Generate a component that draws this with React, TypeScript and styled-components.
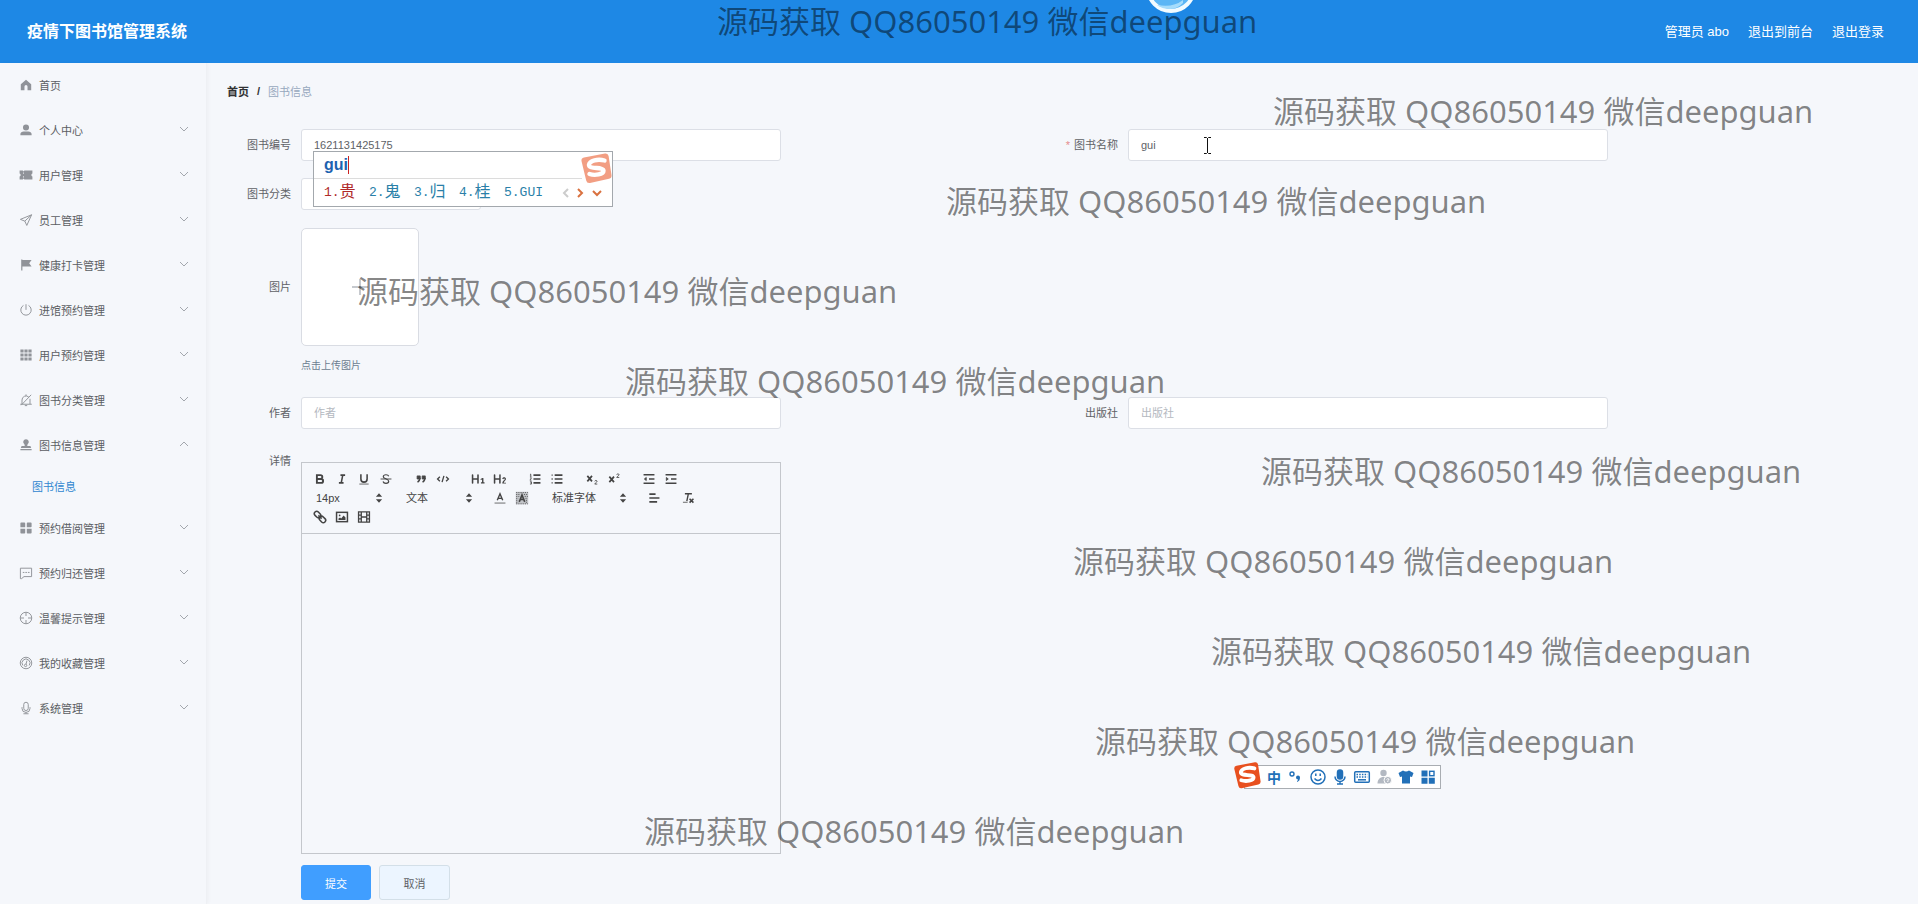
import React from "react";
import styled, { createGlobalStyle } from "styled-components";

const SANS = '"Liberation Sans", "Noto Sans CJK SC", sans-serif';

const Global = createGlobalStyle`
  *, *::before, *::after { box-sizing: border-box; }
  html, body { margin: 0; background: #f5f7fa; }
  body { font-family: ${SANS}; font-size: 11px; color: #606266; overflow: hidden; }
  button, input, select { font: inherit; color: inherit; }
  a { color: inherit; text-decoration: none; }
`;

const Page = styled.div`
  position: relative;
  min-height: 100vh;
  display: flex;
  flex-direction: column;
  background: #f5f7fb;
  overflow: hidden;
`;

const Header = styled.header`
  height: 63px;
  padding: 0 34px 0 27px;
  display: flex;
  align-items: center;
  justify-content: space-between;
  background: #1e88e5;
  color: #fff;
`;

const Title = styled.h1`
  margin: 0;
  font-size: 16px;
  line-height: 24px;
  font-weight: 700;
`;

const UserLinks = styled.nav`
  display: flex;
  gap: 19px;
  font-size: 13px;
  line-height: 20px;
`;

const Body = styled.div`
  flex: 1;
  display: flex;
`;

const Sidebar = styled.nav`
  flex: 0 0 207px;
  border-right: 1px solid #eef0f4;
  box-shadow: 1px 0 4px rgba(0, 0, 0, 0.04);
`;

const MenuItem = styled.a<{ $plain?: boolean }>`
  height: ${(p) => (p.$plain ? 44 : 45)}px;
  padding: 0 16px 0 18px;
  display: flex;
  align-items: center;
  gap: 5px;
  color: #5b5e63;

  > svg:first-child { color: #909399; }
  > svg:last-child:not(:first-child) { margin-left: auto; color: #a3a7ad; }
`;

const SubItem = styled.a`
  height: 38px;
  padding-left: 32px;
  display: flex;
  align-items: center;
  color: #2f86d0;
`;

const Main = styled.main`
  flex: 1;
  min-width: 0;
  padding: 18px 27px 4px 20px;
`;

const Crumbs = styled.nav`
  height: 20px;
  display: flex;
  align-items: center;
  gap: 8px;
  color: #97a8be;

  a { color: #303133; font-weight: 700; }
  span { color: #303133; font-weight: 700; }
`;

const Form = styled.form`
  margin-top: 28px;
  padding-left: 10px;
  display: flex;
  flex-direction: column;
`;

const Row = styled.div<{ $gap?: number }>`
  display: grid;
  grid-template-columns: 1fr 1fr;
  margin-bottom: ${(p) => p.$gap ?? 17}px;
`;

const Field = styled.div`
  display: flex;
  align-items: flex-start;
`;

const Label = styled.label<{ $tall?: boolean; $top?: boolean }>`
  flex: 0 0 64px;
  padding-right: 10px;
  text-align: right;
  white-space: nowrap;
  line-height: ${(p) => (p.$tall ? 118 : p.$top ? 0 : 32)}px;
`;

const Star = styled.span`
  margin-right: 4px;
  color: #e58c8c;
`;

const TextInput = styled.input`
  width: 480px;
  height: 32px;
  padding: 0 12px;
  border: 1px solid #dcdfe6;
  border-radius: 3px;
  background: #fff;
  outline: none;
  &::placeholder { color: #b4b8c0; opacity: 1; }
`;

const CategorySelect = styled.select`
  width: 180px;
  height: 32px;
  padding: 0 12px;
  border: 1px solid #dcdfe6;
  border-radius: 3px;
  background: #fff;
  appearance: none;
`;

const UploadBox = styled.button`
  width: 118px;
  height: 118px;
  display: flex;
  align-items: center;
  justify-content: center;
  border: 1px solid #d9dce3;
  border-radius: 5px;
  background: #fff;
  color: #8c939d;
`;

const Hint = styled.p`
  margin: 10px 0 0;
  font-size: 10px;
  line-height: 20px;
  color: #6c7d90;
`;

const Editor = styled.div`
  width: 480px;
  margin-top: 1px;
  border: 1px solid #c4c7cc;
`;

const Toolbar = styled.div`
  padding: 6px 6px 7px 7px;
  border-bottom: 1px solid #c4c7cc;
  color: #444;
`;

const ToolRow = styled.div<{ $gap: number }>`
  height: 19px;
  display: flex;
  align-items: center;
  gap: ${(p) => p.$gap}px;
`;

const ToolGroup = styled.div`
  display: flex;
`;

const ToolButton = styled.button`
  width: 22px;
  height: 19px;
  padding: 0;
  display: flex;
  align-items: center;
  justify-content: center;
  border: 0;
  background: none;
`;

const Picker = styled.div<{ $w: number }>`
  width: ${(p) => p.$w}px;
  height: 19px;
  padding-right: 1px;
  display: flex;
  align-items: center;

  select {
    flex: 1;
    min-width: 0;
    height: 19px;
    padding: 0 0 0 7px;
    border: 0;
    background: none;
    appearance: none;
  }
`;

const Writing = styled.div`
  height: 319px;
  outline: none;
`;

const Actions = styled.div`
  margin: 11px 0 0 64px;
  display: flex;
  gap: 8px;
`;

const Action = styled.button<{ $primary?: boolean }>`
  width: ${(p) => (p.$primary ? 70 : 71)}px;
  height: 35px;
  padding: 0;
  border: 1px solid ${(p) => (p.$primary ? "#409eff" : "#d3dfe8")};
  border-radius: 3px;
  background: ${(p) => (p.$primary ? "#409eff" : "#ecf5ff")};
  color: ${(p) => (p.$primary ? "#fff" : "#606266")};
`;

const Watermark = styled.div<{ $x: number; $y: number }>`
  position: absolute;
  left: ${(p) => p.$x}px;
  top: ${(p) => p.$y}px;
  z-index: 5;
  font: 31px/40px "Noto Sans", "Noto Sans CJK SC", sans-serif;
  white-space: nowrap;
  color: rgba(0, 0, 0, 0.48);
  pointer-events: none;
`;

const Bubble = styled.svg`
  position: absolute;
  left: 1146px;
  top: 0;
  z-index: 4;
`;

const Pointer = styled.svg`
  position: absolute;
  left: 1203px;
  top: 137px;
  z-index: 6;
`;

const Ime = styled.div`
  position: absolute;
  left: 313px;
  top: 151px;
  z-index: 4;
  width: 300px;
  height: 56px;
  border: 1px solid #a3a8ad;
  background: #fff;

  > svg { position: absolute; right: 0; top: 0; }
`;

const Composing = styled.div`
  height: 27px;
  margin-right: 30px;
  padding-left: 10px;
  display: flex;
  align-items: center;
  border-bottom: 1px solid #dcdcdc;
  font-size: 16px;
  font-weight: 700;
  color: #1d62b0;

  &::after { content: ""; width: 1px; height: 18px; background: #c22; }
`;

const Candidates = styled.div`
  height: 27px;
  padding: 0 6px 0 10px;
  display: flex;
  align-items: center;
  font: 13px/20px "Liberation Mono", "Noto Sans CJK SC", monospace;
  color: #2a7fa8;
`;

const Candidate = styled.span<{ $hot?: boolean }>`
  width: 45px;
  display: flex;
  align-items: center;
  white-space: nowrap;
  color: ${(p) => (p.$hot ? "#b02a2a" : "inherit")};

  b { font-size: 16px; font-weight: 400; }
`;

const ImeNav = styled.span`
  margin-left: auto;
  display: flex;
  align-items: center;
`;

const ImeBar = styled.div`
  position: absolute;
  left: 1244px;
  top: 765px;
  z-index: 6;
  width: 197px;
  height: 24px;
  padding-left: 18px;
  display: flex;
  align-items: center;
  border: 1px solid #a9adb2;
  background: #fff;
  color: #2270b8;

  > svg:first-child { position: absolute; left: -12px; top: -5px; }
  > svg:not(:first-child), > span { flex: 0 0 22px; }
  > span { font: 700 14px/20px "Noto Sans CJK SC", sans-serif; text-align: center; }
`;

const menuIcons: Record<string, React.ReactNode> = {
  home: <path fill="currentColor" d="M8 1.5 1.5 7v7.5h4.6V10a1.9 1.9 0 0 1 3.8 0v4.5h4.6V7z" />,
  user: <path fill="currentColor" d="M8 1a3.8 3.8 0 1 1 0 7.6A3.8 3.8 0 0 1 8 1zM1 14.5V13c0-2 2-3.200 4-3.200h6c2 0 4 1.200 4 3.200v1.500z" />,
  ticket: <path fill="currentColor" d="M0 2.500h4l1 1 1-1h10v3.700a1.900 1.900 0 0 0 0 3.600v3.700H6l-1-1-1 1H0V9.800a1.900 1.900 0 0 0 0-3.600zM4.500 5v1.500h1V5zm0 4.500V11h1V9.500z" />,
  send: <path d="M15 1.500 1 7.200l5.500 2.200L9 14.800zM15 1.500 6.500 9.400" />,
  flag: <path fill="currentColor" d="M2 1h1.500v.8H15l-3 4 3 4.200H3.500V15H2z" />,
  power: <path d="M8 .8v7M4.800 2.300a6.500 6.500 0 1 0 6.400 0" />,
  grid9: <path fill="currentColor" d="M1 1h4v4H1zM6 1h4v4H6zM11 1h4v4h-4zM1 6h4v4H1zM6 6h4v4H6zM11 6h4v4h-4zM1 11h4v4H1zM6 11h4v4H6zM11 11h4v4h-4z" />,
  bell: <path d="M.8 13.300h14.400M3 13V8a5 5 0 0 1 8.500-3.600M13 6.500V13M8 3V1M6.500 15h3M2 14.500 14.500 1.500" />,
  stamp: <path fill="currentColor" d="M8 .8a3.400 3.400 0 0 1 2 6.200l-.5 2.200h4l1 2.500h-13l1-2.500h4L6 7A3.400 3.400 0 0 1 8 .8zM1 13h14v1.700H1z" />,
  grid4: <path fill="currentColor" d="M2 1h4q1 0 1 1v5H1V2q0-1 1-1zM10 1h4q1 0 1 1v4q0 1-1 1H9V2q0-1 1-1zM1 9h6v5q0 1-1 1H2q-1 0-1-1zM9 9h6v5q0 1-1 1h-4q-1 0-1-1z" />,
  chat: <path d="M1 2h14v10.500H5.500L2.500 15H1zM4 7.300h2M7.200 7.300h2M10.400 7.300h2" />,
  aim: <path d="M8 .8a7.200 7.200 0 1 0 0 14.400A7.200 7.200 0 0 0 8 .8zM8 1v4.500M8 10.500V15M1 8h4.500M10.500 8H15" />,
  gauge: <path d="M8 .8a7.200 7.200 0 1 0 0 14.400A7.200 7.200 0 0 0 8 .8zM4 11a5 5 0 1 1 8 0M7.500 9.500a1.500 1.500 0 1 0 0 3 1.500 1.500 0 0 0 0-3zM8 9.500l1.200-4.500" />,
  mic: <path d="M8 .8a2.800 2.800 0 0 1 2.800 2.800v4.800a2.800 2.800 0 0 1-5.600 0V3.600A2.800 2.800 0 0 1 8 .8zM3 7v1.500a5 5 0 0 0 10 0V7M8 13.500V15M4.800 15.200h6.400" />,
};

const MenuIcon = ({ name }: { name: string }) => (
  <svg width="16" height="16" viewBox="-2 -2 20 20" fill="none" stroke="currentColor" strokeWidth={/home|user|ticket|flag|grid|stamp/.test(name) ? 0 : 1.2}>
    {menuIcons[name]}
  </svg>
);

const Chevron = ({ up }: { up?: boolean }) => (
  <svg width="12" height="12" viewBox="0 0 12 12" fill="none" stroke="currentColor">
    <path d={up ? "M2 7l4-4 4 4" : "M2 3l4 4 4-4"} />
  </svg>
);

const Sogou = ({ size, faded }: { size: number; faded?: boolean }) => (
  <svg width={size} height={size} viewBox="0 0 32 32" opacity={faded ? 0.55 : 1}>
    <path d="M4 5.500 25 1.500q3-.5 3.600 2.500L31.500 23q.5 3-2.500 3.800L10 31q-3 .6-3.800-2.400L1.500 9Q1 6 4 5.500z" fill="#e8501f" />
    <path d="M24.500 8.500C18 6.500 9.500 8.500 9 12.800c-.4 5 14.500 1.600 14.500 6 0 3.600-8.500 5-14 3.200" fill="none" stroke="#fff" strokeWidth="4.400" strokeLinecap="round" />
  </svg>
);

const tools: Record<string, React.ReactNode> = {
  粗体: <g strokeWidth="2.400"><path d="M5 4h4.500a2.500 2.500 0 0 1 0 5H5zM5 9h5.500a2.500 2.500 0 0 1 0 5H5z" /></g>,
  斜体: <g strokeWidth="2"><path d="M7 4h6M5 14h6M8 14l2-10" /></g>,
  下划线: <><path strokeWidth="2" d="M5 3v6a4 4 0 0 0 8 0V3" /><path strokeWidth="1" d="M3 15.500h12" /></>,
  删除线: <><path strokeWidth="1.500" d="M12.500 5.500C12 4 10.500 3.500 9 3.500c-2 0-3.500 1-3.500 2.600C5.500 9 12.500 8.500 12.500 12c0 1.600-1.500 2.600-3.500 2.600-1.800 0-3.400-.8-3.800-2.400" /><path strokeWidth="1.200" d="M2 9h14" /></>,
  引用: <g fill="currentColor" strokeWidth="1"><path d="M4 5h4v4H4zM10.500 5h4v4h-4z" /><path strokeWidth="2" fill="none" d="M7.500 7.500c0 3-1 4.500-3 5.500M14 7.500c0 3-1 4.500-3 5.500" /></g>,
  代码: <g strokeWidth="1.700"><path d="M5 6 2 9l3 3M13 6l3 3-3 3M10.200 5 7.800 13" /></g>,
  一级标题: <path fill="currentColor" stroke="none" d="M10 4v10a1 1 0 0 1-2 0v-4H3v4a1 1 0 0 1-2 0V4a1 1 0 0 1 2 0v4h5V4a1 1 0 0 1 2 0zm6 9.200V8.200c0-.3-.3-.5-.6-.5h-.8l-2.200 1.200v1.400l1.800-.6v3.500h-1.400V14.800h4.600v-1.600z" />,
  二级标题: <path fill="currentColor" stroke="none" d="M16.700 13.800v1H12v-1c.3-2.600 3.200-3 3.200-4.700 0-1.300-1.800-1-1.900.1l-1.400-.4c.4-2.800 4.800-2.500 4.800.2 0 2-2.600 2.700-2.900 4.800zM9.900 4v10a1 1 0 0 1-2 0v-4H3v4a1 1 0 0 1-2 0V4a1 1 0 0 1 2 0v4h5V4a1 1 0 0 1 2 0z" />,
  有序列表: <><path strokeWidth="2" d="M7 4h9M7 9h9M7 14h9" /><path strokeWidth="1" d="M3.500 2.500v3M2.500 5.500h2M2.500 3.500l1-.8M2.500 7.500h2l-2 3h2M2.500 12.500h2v3h-2M3 14h1.500" /></>,
  无序列表: <><path strokeWidth="2" d="M6 4h10M6 9h10M6 14h10" /><path strokeWidth="1.800" d="M2 4h1.500M2 9h1.500M2 14h1.500" /></>,
  下标: <><path strokeWidth="2.200" d="M3 5l6 7M9 5l-6 7" /><path strokeWidth="1.100" d="M12.500 12c.2-1.500 3-1.500 3 0 0 1.200-2.500 2-3 3.500h3.300" /></>,
  上标: <><path strokeWidth="2.200" d="M3 6l6 7M9 6l-6 7" /><path strokeWidth="1.100" d="M12.500 3.500c.2-1.500 3-1.500 3 0 0 1.200-2.500 2-3 3.500h3.300" /></>,
  减少缩进: <><path strokeWidth="2" d="M2 3.500h14M9 9h7M2 14.500h14" /><path fill="currentColor" strokeWidth="1" d="M5.500 7v4L3 9z" /></>,
  增加缩进: <><path strokeWidth="2" d="M2 3.500h14M9 9h7M2 14.500h14" /><path fill="currentColor" strokeWidth="1" d="M3 7v4l2.500-2z" /></>,
  文字颜色: <><path strokeWidth="1" d="M2 15.500h14" /><path strokeWidth="1.800" d="M5.500 12 9 3.500l3.500 8.500M6.500 9.500h5" /></>,
  背景颜色: <><path fill="#c3c5c9" stroke="none" d="M1 1h16v16H1z" /><path strokeWidth="1" strokeDasharray="1.400 1.400" d="M1.500 2h15M1.500 4.500h5M1.500 7h4M1.500 9.500h3M1.500 12h3M1.500 14.500h3M1.500 16.500h15M11.500 4.500h5M12.500 7h4M13.500 9.500h3M14 12h2.500M14 14.500h2.500" /><path strokeWidth="2" d="M5.500 14 9 5l3.500 9M6.500 11h5" /></>,
  对齐: <path strokeWidth="2" d="M3 4h8M3 9h13M3 14h10" />,
  清除格式: <><path strokeWidth="1.800" d="M5 3.500h9M9.500 3.500 7.500 13" /><path strokeWidth="1" d="M2.500 14.500h6" /><path strokeWidth="2" d="M11 10l5 5M16 10l-5 5" /></>,
  链接: <g strokeWidth="2" transform="rotate(45 9 9)"><rect x="0" y="6" width="9" height="6" rx="3" /><rect x="9" y="6" width="9" height="6" rx="3" /><path d="M6 9h6" /></g>,
  图片: <><rect strokeWidth="1.900" x="2" y="3" width="14" height="12" /><circle cx="6" cy="7" r="1.100" fill="currentColor" stroke="none" /><path fill="currentColor" stroke="none" d="M4.500 13v-2L6.500 9.500l1.500 1.500L11 7l2.500 2.500V13z" /></>,
  视频: <g strokeWidth="1.700"><path d="M2 2.500h14v13H2zM5.500 2.500v13M12.500 2.500v13M5.500 9h7M2 6.500h3.500M2 11.500h3.500M12.500 6.500H16M12.500 11.500H16" /></g>,
};

const Tool = ({ name }: { name: string }) => (
  <ToolButton type="button" aria-label={name}>
    <svg width="14" height="14" viewBox="0 0 18 18" fill="none" stroke="currentColor">{tools[name]}</svg>
  </ToolButton>
);

const Pick = ({ label, value, w }: { label: string; value: string; w: number }) => (
  <Picker $w={w}>
    <select aria-label={label} defaultValue={value}><option>{value}</option></select>
    <svg width="14" height="14" viewBox="0 0 18 18" fill="currentColor"><path d="M5 7.500h8L9 3zM5 10.500h8L9 15z" /></svg>
  </Picker>
);

const menu: { icon: string; text: string; open?: boolean }[] = [
  { icon: "home", text: "首页" },
  { icon: "user", text: "个人中心" },
  { icon: "ticket", text: "用户管理" },
  { icon: "send", text: "员工管理" },
  { icon: "flag", text: "健康打卡管理" },
  { icon: "power", text: "进馆预约管理" },
  { icon: "grid9", text: "用户预约管理" },
  { icon: "bell", text: "图书分类管理" },
  { icon: "stamp", text: "图书信息管理", open: true },
  { icon: "grid4", text: "预约借阅管理" },
  { icon: "chat", text: "预约归还管理" },
  { icon: "aim", text: "温馨提示管理" },
  { icon: "gauge", text: "我的收藏管理" },
  { icon: "mic", text: "系统管理" },
];

const marks = [
  [717, 1], [1273, 91], [946, 181], [357, 271], [625, 361],
  [1261, 451], [1073, 541], [1211, 631], [1095, 721], [644, 811],
];

const topTools = [
  ["粗体", "斜体", "下划线", "删除线"],
  ["引用", "代码"],
  ["一级标题", "二级标题"],
  ["有序列表", "无序列表"],
  ["下标", "上标"],
  ["减少缩进", "增加缩进"],
];

export default function App() {
  return (
    <Page>
      <Global />
      <Header>
        <Title>疫情下图书馆管理系统</Title>
        <UserLinks>
          <a href="#me">管理员 abo</a>
          <a href="#front">退出到前台</a>
          <a href="#logout">退出登录</a>
        </UserLinks>
      </Header>
      <Body>
        <Sidebar>
          {menu.map((m) => (
            <React.Fragment key={m.text}>
              <MenuItem href="#menu" $plain={m.icon === "home"}>
                <MenuIcon name={m.icon} />
                {m.text}
                {m.icon !== "home" && <Chevron up={m.open} />}
              </MenuItem>
              {m.open && <SubItem href="#books">图书信息</SubItem>}
            </React.Fragment>
          ))}
        </Sidebar>
        <Main>
          <Crumbs>
            <a href="#home">首页</a>
            <span>/</span>
            图书信息
          </Crumbs>
          <Form>
            <Row>
              <Field>
                <Label htmlFor="no">图书编号</Label>
                <TextInput id="no" defaultValue="1621131425175" />
              </Field>
              <Field>
                <Label htmlFor="name"><Star>*</Star>图书名称</Label>
                <TextInput id="name" defaultValue="gui" />
              </Field>
            </Row>
            <Row $gap={18}>
              <Field>
                <Label htmlFor="kind">图书分类</Label>
                <CategorySelect id="kind" />
              </Field>
            </Row>
            <Row $gap={21}>
              <Field>
                <Label htmlFor="pic" $tall>图片</Label>
                <div>
                  <UploadBox id="pic" type="button" aria-label="上传图片">
                    <svg width="22" height="22" viewBox="0 0 22 22" stroke="currentColor"><path d="M11 3v16M3 11h16" /></svg>
                  </UploadBox>
                  <Hint>点击上传图片</Hint>
                </div>
              </Field>
            </Row>
            <Row $gap={32}>
              <Field>
                <Label htmlFor="author">作者</Label>
                <TextInput id="author" placeholder="作者" />
              </Field>
              <Field>
                <Label htmlFor="press">出版社</Label>
                <TextInput id="press" placeholder="出版社" />
              </Field>
            </Row>
            <Field>
              <Label as="span" $top id="detail">详情</Label>
              <Editor>
                <Toolbar>
                  <ToolRow $gap={13}>
                    {topTools.map((g) => (
                      <ToolGroup key={g[0]}>{g.map((t) => <Tool key={t} name={t} />)}</ToolGroup>
                    ))}
                  </ToolRow>
                  <ToolRow $gap={12}>
                    <Pick label="字号" value="14px" w={78} />
                    <Pick label="段落" value="文本" w={78} />
                    <ToolGroup><Tool name="文字颜色" /><Tool name="背景颜色" /></ToolGroup>
                    <Pick label="字体" value="标准字体" w={86} />
                    <Tool name="对齐" />
                    <Tool name="清除格式" />
                  </ToolRow>
                  <ToolRow $gap={0}>
                    <Tool name="链接" /><Tool name="图片" /><Tool name="视频" />
                  </ToolRow>
                </Toolbar>
                <Writing contentEditable role="textbox" aria-labelledby="detail" suppressContentEditableWarning />
              </Editor>
            </Field>
            <Actions>
              <Action type="button" $primary>提交</Action>
              <Action type="button">取消</Action>
            </Actions>
          </Form>
        </Main>
      </Body>

      <Bubble width="50" height="14" viewBox="0 0 50 14">
        <circle cx="25" cy="-12" r="23" fill="#5cb6f5" stroke="#f2fbff" strokeWidth="4" />
        <path d="M11 5q16 3 26-5v3q-6 6-13 6-8 0-13-4z" fill="#a6dcfb" />
      </Bubble>

      <Ime>
        <Composing>gui</Composing>
        <Candidates>
          <Candidate $hot>1.<b>贵</b></Candidate>
          <Candidate>2.<b>鬼</b></Candidate>
          <Candidate>3.<b>归</b></Candidate>
          <Candidate>4.<b>桂</b></Candidate>
          <Candidate>5.GUI</Candidate>
          <ImeNav>
            <svg width="48" height="14" viewBox="0 0 48 14" fill="none" strokeWidth="2">
              <path d="M10 3 6 7l4 4" stroke="#ccc" />
              <path d="m20 3 4 4-4 4M35 5l4 4 4-4" stroke="#d9713f" />
            </svg>
          </ImeNav>
        </Candidates>
        <Sogou size={32} faded />
      </Ime>

      <ImeBar>
        <Sogou size={28} />
        <span>中</span>
        <svg width="22" height="20" viewBox="0 0 22 20"><circle cx="7" cy="7" r="2" fill="none" stroke="currentColor" strokeWidth="1.400" /><path fill="currentColor" d="M11 10.500a2 2 0 1 1 4 0q0 3.500-3 4.500v-1q1-.5 1-1.500a2 2 0 0 1-2-2z" /></svg>
        <svg width="22" height="20" viewBox="0 0 22 20" fill="none" stroke="currentColor" strokeWidth="1.500"><circle cx="11" cy="10" r="7" /><path d="M7.500 11.500q3.500 4 7 0M8.800 6.500v2.500M13.200 6.500v2.500" /></svg>
        <svg width="22" height="20" viewBox="0 0 22 20" fill="none" stroke="currentColor" strokeWidth="1.500"><rect x="8.500" y="3" width="5" height="9" rx="2.500" fill="currentColor" /><path d="M6 9.500a5 5 0 0 0 10 0M11 14.500v3M8 17h6" /></svg>
        <svg width="22" height="20" viewBox="0 0 22 20" fill="none" stroke="currentColor" strokeWidth="1.500"><rect x="3.700" y="4.700" width="14.600" height="10.600" rx="1" /><path strokeDasharray="1.500 1.200" d="M5.500 7.500h11M5.500 10h11" /><path d="M7 12.800h8" /></svg>
        <svg width="22" height="20" viewBox="0 0 22 20" fill="#b3b9c2"><circle cx="10.500" cy="6" r="3.200" /><path d="M4.500 16.500c0-4 2.500-6.500 6-6.500 2 0 3 .5 4 1.500v5z" /><circle cx="14.800" cy="13.200" r="3.800" stroke="#fff" /><path d="M13.500 12.500q1.300-1.500 2.500-.3 0 .8-1.200 1.500v1.300" stroke="#fff" fill="none" /></svg>
        <svg width="22" height="20" viewBox="0 0 22 20" fill="currentColor"><path d="M8 3.500q3 2 6 0l4.500 2.500-1.500 4-2-.6v7.100H7V9.400L5 10 3.500 6z" /></svg>
        <svg width="22" height="20" viewBox="0 0 22 20" fill="currentColor"><path d="M4.500 3.500h6v6h-6zM4.500 10.800h6v6h-6zM11.800 10.800h6v6h-6z" /><rect x="12.600" y="4.300" width="4.400" height="4.400" fill="none" stroke="currentColor" strokeWidth="1.400" /></svg>
      </ImeBar>

      <Pointer width="9" height="17" viewBox="0 0 9 17" fill="none" stroke="#111"><path d="M1 .5h2.500l1 1 1-1H8M1 16.500h2.500l1-1 1 1H8M4.500 1v15" /></Pointer>

      {marks.map(([x, y]) => (
        <Watermark key={y} $x={x} $y={y}>源码获取 QQ86050149 微信deepguan</Watermark>
      ))}
    </Page>
  );
}
